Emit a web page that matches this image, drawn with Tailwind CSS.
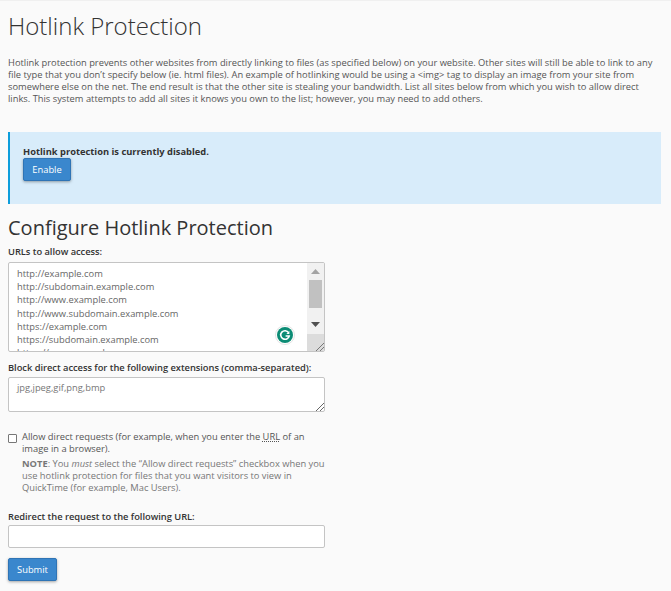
<!DOCTYPE html>
<html lang="en">
<head>
    <meta charset="UTF-8">
    <title>Hotlink Protection</title>
    <script src="https://cdn.jsdelivr.net/npm/@tailwindcss/browser@4"></script>
</head>
<body class="bg-[#fafafa] font-['Open_Sans',sans-serif] text-[#333] overflow-hidden">
    <div class="h-[591px] w-[671px] border-t border-[#f0f0f0] px-2 pr-[10px]">
        <h1 class="mt-[8px] text-[24px] leading-[33px] font-light text-[#333]">Hotlink Protection</h1>

        <p class="mt-[15px] text-[9.33px] leading-[12px] whitespace-nowrap text-[#555]">
            Hotlink protection prevents other websites from directly linking to files (as specified below) on your website. Other sites will still be able to link to any<br>
            file type that you don’t specify below (ie. html files). An example of hotlinking would be using a &lt;img&gt; tag to display an image from your site from<br>
            somewhere else on the net. The end result is that the other site is stealing your bandwidth. List all sites below from which you wish to allow direct<br>
            links. This system attempts to add all sites it knows you own to the list; however, you may need to add others.
        </p>

        <!-- Status callout -->
        <div class="mt-[27px] h-[72px] border-l-2 border-[#0d9ddb] bg-[#d8ecfa] pl-[13px] pt-[14px]">
            <div class="text-[9.33px] leading-[12px] font-bold">Hotlink protection is currently disabled.</div>
            <button class="block h-[23px] w-[48px] rounded-[2px] border border-[#2f74b5] bg-[#3a87cd] text-[9.33px] text-white shadow-[0_1px_3px_rgba(0,0,0,0.35)]">Enable</button>
        </div>

        <h2 class="mt-[10px] text-[20px] leading-[27px] text-[#333]">Configure Hotlink Protection</h2>

        <form class="w-[317px]">
            <label class="mt-[4px] block text-[9.33px] leading-[14px] tracking-[-0.03px] whitespace-nowrap font-semibold">URLs to allow access:</label>
            <div class="relative mt-[3px] flex h-[90px] overflow-hidden rounded-[2px] border border-[#c4c4c4] bg-white">
                <div class="flex-1 overflow-hidden pl-2 pt-[4px] text-[9.33px] leading-[13.2px] text-[#666]">
                    <div>http://example.com</div>
                    <div>http://subdomain.example.com</div>
                    <div>http://www.example.com</div>
                    <div>http://www.subdomain.example.com</div>
                    <div>https://example.com</div>
                    <div>https://subdomain.example.com</div>
                    <div>https://www.example.com</div>
                </div>
                <!-- scrollbar -->
                <div class="flex w-[17px] flex-col bg-[#f1f1f1]">
                    <div class="flex h-[17px] items-center justify-center">
                        <svg width="9" height="5" viewBox="0 0 9 5"><path d="M4.5 0 9 5H0z" fill="#a3a3a3"/></svg>
                    </div>
                    <div class="mx-auto h-[28px] w-[13px] bg-[#c1c1c1]"></div>
                    <div class="mt-[8px] flex h-[17px] items-center justify-center">
                        <svg width="9" height="5" viewBox="0 0 9 5"><path d="M0 0h9L4.5 5z" fill="#505050"/></svg>
                    </div>
                    <div class="relative mt-auto h-[17px] bg-[#dcdcdc]">
                        <svg class="absolute bottom-0 right-0" width="10" height="10" viewBox="0 0 10 10"><path d="M2 10 10 2M6 10l4-4" stroke="#777" fill="none"/></svg>
                    </div>
                </div>
                <!-- grammarly badge -->
                <div class="absolute left-[266px] top-[62px] flex h-[20px] w-[20px] items-center justify-center rounded-full border border-[#e4e4e4] bg-white">
                    <svg width="16" height="16" viewBox="0 0 16 16">
                        <circle cx="8" cy="8" r="8" fill="#0c8c75"/>
                        <path d="M11.6 5.6A4.3 4.3 0 1 0 12.2 9H8.6" fill="none" stroke="#fff" stroke-width="1.6"/>
                        <path d="M12.4 4v3h-3z" fill="#fff"/>
                    </svg>
                </div>
            </div>

            <label class="mt-[9px] block text-[9.33px] leading-[14px] tracking-[-0.03px] whitespace-nowrap font-semibold">Block direct access for the following extensions (comma-separated):</label>
            <div class="relative mt-[2px] h-[35px] rounded-[2px] border border-[#c4c4c4] bg-white pl-2 pt-[3px] text-[9.33px] leading-[13px] text-[#777]">
                jpg,jpeg,gif,png,bmp
                <svg class="absolute bottom-0 right-0" width="10" height="10" viewBox="0 0 10 10"><path d="M2 10 10 2M6 10l4-4" stroke="#666" fill="none"/></svg>
            </div>

            <div class="mt-[19px] flex">
                <span class="mt-[3px] h-[9px] w-[9px] shrink-0 rounded-[1px] border border-[#777] bg-white"></span>
                <div class="ml-[5px] text-[9.33px] leading-[12px] whitespace-nowrap text-[#555]">
                    <div>Allow direct requests (for example, when you enter the <span class="underline decoration-dotted">URL</span> of an<br>image in a browser).</div>
                    <div class="mt-[3px] text-[#777]"><b>NOTE</b>: You <i>must</i> select the “Allow direct requests” checkbox when you<br>use hotlink protection for files that you want visitors to view in<br>QuickTime (for example, Mac Users).</div>
                </div>
            </div>

            <label class="mt-[16px] block text-[9.33px] leading-[14px] tracking-[-0.03px] whitespace-nowrap font-semibold">Redirect the request to the following URL:</label>
            <div class="mt-[1px] h-[23px] rounded-[2px] border border-[#c4c4c4] bg-white"></div>
            <button class="mt-[10px] block h-[23px] w-[49px] rounded-[2px] border border-[#2f74b5] bg-[#3a87cd] text-[9.33px] text-white shadow-[0_1px_3px_rgba(0,0,0,0.35)]">Submit</button>
        </form>
    </div>
</body>
</html>
